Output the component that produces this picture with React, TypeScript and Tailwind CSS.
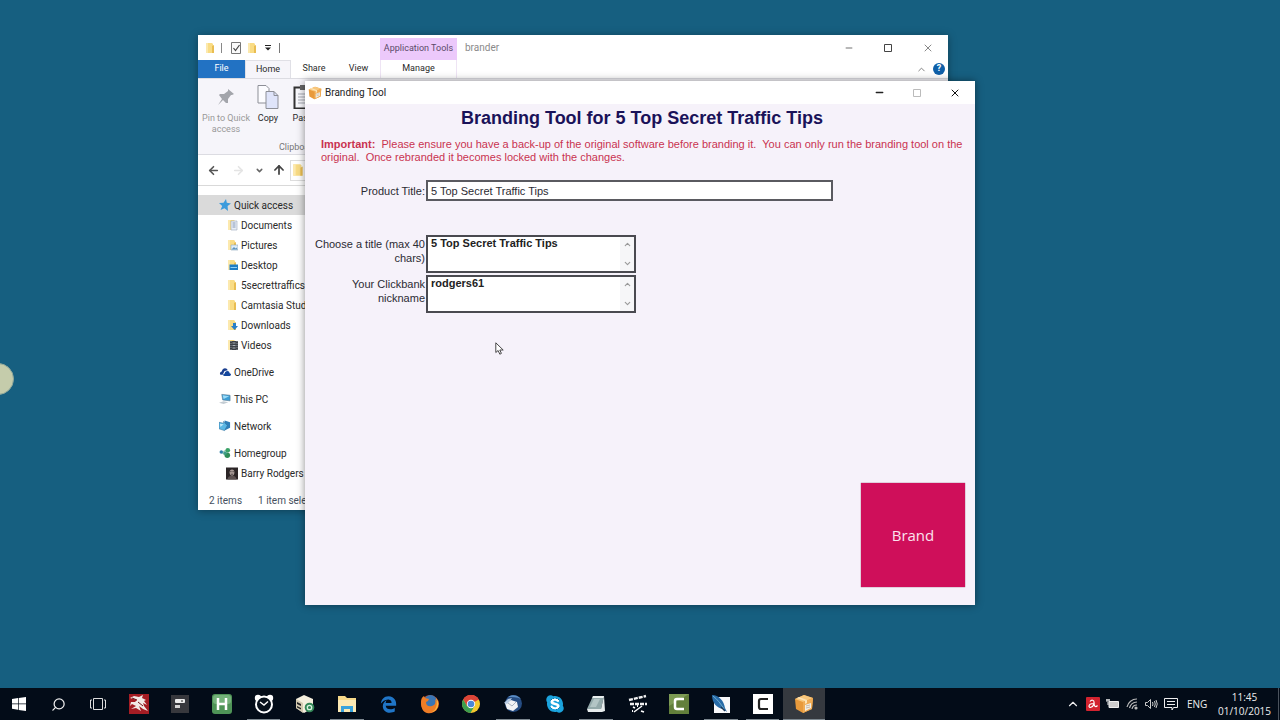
import type { ReactNode } from "react";
import { ArrowLeft, ArrowRight, ArrowUp, ChevronDown, ChevronUp, Minus, Search, X } from "lucide-react";
import { FaEdgeLegacy, FaSkype } from "react-icons/fa6";

function FolderIcon({ size = 12, children }: { size?: number; children?: ReactNode }) {
  return (
    <svg width={size} height={size} viewBox="0 0 12 12" className="shrink-0">
      <path d="M2 1h6l1 1v9H2z" fill="#f9dc85" />
      <path d="M8 4l2-1v8H8z" fill="#e9bd52" />
      <path d="M2 1h2v10H2z" fill="#fce9ae" />
      {children}
    </svg>
  );
}

function BoxIcon({ size = 14 }: { size?: number }) {
  return (
    <svg width={size} height={size} viewBox="0 0 20 20" className="shrink-0">
      <path d="M1 5l9-4 9 3-1 11-9 4-7-4z" fill="#e89a3c" />
      <path d="M1 5l9-4 9 3-10 4z" fill="#f8c77c" />
      <path d="M9 8l10-4-1 11-9 4z" fill="#f0ac55" />
      <path d="M5 3l8 3v3l-2 1V7L3 4z" fill="#fde3b4" />
      <path d="M11 11l6-2v5l-6 3z" fill="#f3efe6" />
      <path d="M12 12l4-1M12 14l4-1" stroke="#b7aa98" strokeWidth=".8" />
    </svg>
  );
}

function MaximiseIcon({ color }: { color: string }) {
  return (
    <svg width="10" height="10" viewBox="0 0 10 10">
      <path d="M1.500 1.500h7v7h-7z" fill="none" stroke={color} />
    </svg>
  );
}

const treeIcons: Record<string, ReactNode> = {
  star: (
    <svg width="12" height="12" viewBox="0 0 12 12">
      <path d="M7 0l.8 3.800L12 4.500 8.600 7l.4 5-3.500-2.800L1.500 11l1.700-4L0 4l4.500-.2z" fill="#3a9bdc" />
    </svg>
  ),
  documents: (
    <FolderIcon>
      <path d="M5 2h6v9H5z" fill="#e8edf5" stroke="#9aa9bd" strokeWidth=".6" />
      <path d="M6.500 4h3M6.500 6h3M6.500 8h3" stroke="#6f86a8" strokeWidth=".8" />
    </FolderIcon>
  ),
  pictures: (
    <FolderIcon>
      <path d="M5 6h7v5H5z" fill="#dcecf8" stroke="#8ea7bc" strokeWidth=".6" />
      <path d="M5.500 10.500L8 8l1.500 1.500 1-1 1 2z" fill="#5d94bd" />
    </FolderIcon>
  ),
  desktop: (
    <FolderIcon>
      <path d="M3.500 5.500H12V11H3.500z" fill="#1f7cc4" />
      <path d="M4.500 8.500H11" stroke="#8fd0f5" />
    </FolderIcon>
  ),
  folder: <FolderIcon />,
  downloads: (
    <FolderIcon>
      <path d="M7 4h3v3h2l-3.500 4L5 7h2z" fill="#2a7fc8" />
    </FolderIcon>
  ),
  videos: (
    <FolderIcon>
      <path d="M4 2h8v9H4z" fill="#3d4147" />
      <path d="M6.500 4h3M6.500 6.500h3M6.500 9h3" stroke="#a9b0b8" />
      <path d="M5 2v9M11 2v9" stroke="#8b9097" strokeDasharray="1 1" />
    </FolderIcon>
  ),
  onedrive: (
    <svg width="13" height="12" viewBox="0 0 13 12">
      <path d="M1 8c0-1.500 1-2.500 2-2.500C3.500 3 5 2 6.500 2 8 2 9 3 9.500 4L6 5 4 9H2C1.300 9 1 8.600 1 8z" fill="#1b3f8f" />
      <path d="M4.500 9.500c0-1.200.8-2 1.700-2C6.500 6 7.500 5 9 5s2.200 1 2.500 2.300c1 .1 1.500.8 1.500 1.500 0 .9-.7 1.400-1.500 1.400H5.800c-.8 0-1.300-.3-1.300-.7z" fill="#14479e" />
    </svg>
  ),
  pc: (
    <svg width="13" height="12" viewBox="0 0 13 12">
      <path d="M3 1l9 1v6l-8-1z" fill="#3c9ed6" stroke="#5a7e97" strokeWidth=".7" />
      <path d="M4 2l7 1-6 3z" fill="#9bdcf8" />
      <path d="M0 10l5-1.500 5 1L5 11.500z" fill="#c3ccd3" />
    </svg>
  ),
  network: (
    <svg width="13" height="12" viewBox="0 0 13 12">
      <path d="M6 0l6 2v6l-6 3z" fill="#2f7fb9" />
      <path d="M0 2l5 1V1l4 4.500L6 11 0 9z" fill="#5bb7e4" stroke="#2f6f9c" strokeWidth=".6" />
      <path d="M1 3.500l4 .6L1.500 7z" fill="#bfe8fa" />
    </svg>
  ),
  homegroup: (
    <svg width="13" height="12" viewBox="0 0 13 12">
      <path d="M2.500 5.500L9 2M2.500 5.500L9 9.500" stroke="#7fb9a0" strokeWidth=".8" />
      <circle cx="2.500" cy="5" r="1.900" fill="#2d7fa8" />
      <circle cx="9.500" cy="3" r="2.500" fill="#3aa267" />
      <circle cx="9" cy="8.500" r="3" fill="#2f8d58" />
      <circle cx="6.500" cy="6" r="2" fill="#3f9d87" />
    </svg>
  ),
  user: (
    <svg width="13" height="13" viewBox="0 0 13 13">
      <path d="M0 0h13v13H0z" fill="#2b2526" />
      <ellipse cx="6.500" cy="5.500" rx="2.600" ry="3.400" fill="#a99c98" />
      <path d="M4.500 4.500h1.500M7 4.500h1.500M5.300 7.300h2.400" stroke="#3b3233" strokeWidth=".8" />
      <path d="M1.500 13c.5-3 2.500-4 5-4s4.500 1 5 4z" fill="#5c5252" />
    </svg>
  ),
};

const quickAccess = [
  { label: "Documents", icon: "documents" },
  { label: "Pictures", icon: "pictures" },
  { label: "Desktop", icon: "desktop" },
  { label: "5secrettrafficsoftware", icon: "folder" },
  { label: "Camtasia Studio", icon: "folder" },
  { label: "Downloads", icon: "downloads" },
  { label: "Videos", icon: "videos" },
];

function TreeItem({ label, icon, nested, active }: { label: string; icon: string; nested?: boolean; active?: boolean }) {
  return (
    <a
      href="#"
      className={`flex h-5 items-center gap-[3px] whitespace-nowrap ${nested ? "pl-7" : "pl-[21px]"} ${active ? "bg-[#dadada]" : ""}`}
    >
      <span className="flex w-3 justify-center">{treeIcons[icon]}</span>
      {label}
    </a>
  );
}

function ExplorerWindow() {
  return (
    <section
      aria-label="brander"
      className="absolute top-[35px] left-[198px] w-[750px] overflow-hidden bg-white font-[Roboto,'Noto_Sans',sans-serif] text-[10px] text-[#2a2a2a] shadow-[0_1px_8px_rgba(0,0,0,0.35)]"
    >
      {/* Title bar */}
      <header className="flex h-[25px] items-center">
        <div className="flex w-[182px] items-center pl-1.5">
          <FolderIcon />
          <span className="ml-[5px] h-2.5 w-px bg-[#888]" />
          <svg width="12" height="12" viewBox="0 0 12 12" className="ml-2">
            <path d="M1.500.5h9v11h-9z" fill="#fafafa" stroke="#777" />
            <path d="M3.500 6l2 2.500 4-5.500" fill="none" stroke="#444" strokeWidth="1.200" />
          </svg>
          <span className="ml-1">
            <FolderIcon />
          </span>
          <svg width="8" height="6" viewBox="0 0 8 6" className="ml-1.5">
            <path d="M1 .5h6" stroke="#222" />
            <path d="M1 2.500h6l-3 3z" fill="#222" />
          </svg>
          <span className="ml-[7px] h-2.5 w-px bg-[#777]" />
        </div>
        <div className="mt-[3px] flex h-[22px] w-[77px] items-center justify-center bg-[#ecc9fb] text-[9px] whitespace-nowrap text-[#5a4a68]">
          Application Tools
        </div>
        <p className="ml-2 flex-1 text-[#8a8a8a]">brander</p>
        <div className="flex gap-[29px] pr-3.5">
          <button type="button" aria-label="Minimise">
            <Minus size={10} strokeWidth={2} color="#555" />
          </button>
          <button type="button" aria-label="Maximise">
            <MaximiseIcon color="#444" />
          </button>
          <button type="button" aria-label="Close">
            <X size={12} strokeWidth={2} color="#888" />
          </button>
        </div>
      </header>

      {/* Ribbon tabs */}
      <nav className="flex h-[18px] items-stretch text-[9px]">
        <button type="button" className="w-[47px] bg-[#2272c3] text-white">File</button>
        <button type="button" className="w-[46px] border-x border-t border-[#e0e0e6] bg-[#f6f5fa]">Home</button>
        <button type="button" className="w-[46px]">Share</button>
        <button type="button" className="w-[43px]">View</button>
        <button type="button" className="w-[77px] border-x border-[#eee4f4]">Manage</button>
        <div className="flex flex-1 items-center justify-end gap-1.5 pr-[3px]">
          <button type="button" aria-label="Collapse ribbon">
            <ChevronUp size={11} color="#777" />
          </button>
          <button type="button" aria-label="Help" className="flex size-3 items-center justify-center rounded-full bg-[#0f5fa8] text-[9px] font-bold text-white">
            ?
          </button>
        </div>
      </nav>

      {/* Ribbon */}
      <div className="flex h-[77px] border-y border-[#dcdce2] bg-[#f6f5fa] pt-1.5 text-[9px] leading-[11px]">
        <button type="button" className="flex w-14 flex-col items-center gap-1 text-[#999]">
          <svg width="20" height="24" viewBox="0 0 20 24">
            <path d="M12 4l6 5-2 1-1 0-3 4 0 4-2 0-3-3-5 5 4-6-3-4 1-1 4 0 4-3z" fill="#a3a5ab" />
          </svg>
          <span>Pin to Quick access</span>
        </button>
        <button type="button" className="flex w-7 flex-col items-center gap-1">
          <svg width="22" height="24" viewBox="0 0 22 24">
            <path d="M1 .5h8l3 3V18H1z" fill="#fcfcff" stroke="#8d8f97" />
            <path d="M9 6.500h8l4 4V23.500H9z" fill="#dfe4fa" stroke="#8d8f97" />
            <path d="M17 6.500v4h4" fill="none" stroke="#8d8f97" />
          </svg>
          <span>Copy</span>
        </button>
        <button type="button" className="ml-2 flex w-7 flex-col items-center gap-1">
          <svg width="22" height="24" viewBox="0 0 22 24">
            <path d="M1.500 2.500h19v21h-19z" fill="#fafafe" stroke="#333" strokeWidth="2" />
            <path d="M7 0h8v5H7z" fill="#666" />
            <path d="M5 9h12M5 12h12M5 15h12M5 18h12" stroke="#a5a9b3" />
          </svg>
          <span>Paste</span>
        </button>
      </div>
      <p className="-mt-3.5 h-3.5 pl-[81px] text-[9px] leading-[12px] text-[#777]">Clipboard</p>

      {/* Address bar */}
      <div className="flex h-[31px] items-center border-b border-[#d9d9d9] pl-[9px]">
        <button type="button" aria-label="Back"><ArrowLeft size={13} strokeWidth={3} color="#555" /></button>
        <button type="button" aria-label="Forward" className="ml-3"><ArrowRight size={13} strokeWidth={3} color="#e4e4e4" /></button>
        <button type="button" aria-label="Recent locations" className="ml-2.5"><ChevronDown size={9} strokeWidth={4} color="#666" /></button>
        <button type="button" aria-label="Up" className="ml-2"><ArrowUp size={14} strokeWidth={3} color="#444" /></button>
        <div className="ml-1 flex h-[21px] flex-1 items-center border border-[#ddd]">
          <FolderIcon size={14} />
        </div>
      </div>

      {/* Navigation tree */}
      <nav className="w-[107px] overflow-hidden pt-[9px]">
        <TreeItem label="Quick access" icon="star" active />
        {quickAccess.map((item) => (
          <TreeItem key={item.label} label={item.label} icon={item.icon} nested />
        ))}
        <div className="flex flex-col gap-[7px] pt-[7px]">
          <TreeItem label="OneDrive" icon="onedrive" />
          <TreeItem label="This PC" icon="pc" />
          <TreeItem label="Network" icon="network" />
          <TreeItem label="Homegroup" icon="homegroup" />
        </div>
        <TreeItem label="Barry Rodgers" icon="user" nested />
      </nav>
      <footer className="mt-[7px] flex h-5 items-center gap-4 pl-[11px] text-[#45505e]">
        <span>2 items</span>
        <span>1 item selected</span>
      </footer>
    </section>
  );
}

function ScrollField({ id, value }: { id: string; value: string }) {
  return (
    <div className="flex h-[38px] w-[210px] border-2 border-[#4a4a50] bg-white">
      <textarea
        id={id}
        defaultValue={value}
        className="min-w-0 flex-1 resize-none overflow-hidden pl-[3px] text-[11px] leading-[13px] font-bold text-[#222] outline-none"
      />
      <div className="flex w-3.5 flex-col items-center justify-between bg-[#f6f6f8] py-[3px]">
        <button type="button" aria-label="Scroll up"><ChevronUp size={9} strokeWidth={3} color="#999" /></button>
        <button type="button" aria-label="Scroll down"><ChevronDown size={9} strokeWidth={3} color="#999" /></button>
      </div>
    </div>
  );
}

function BrandingWindow() {
  return (
    <section
      aria-label="Branding Tool"
      className="absolute top-[81px] left-[305px] w-[670px] bg-[#f6f2fa] font-['Liberation_Sans',Arial,sans-serif] shadow-[0_0_8px_rgba(0,0,0,0.45)]"
    >
      <header className="flex h-[23px] items-center bg-white pl-[3px] font-[Roboto,'Noto_Sans',sans-serif] text-[10px] text-[#222]">
        <BoxIcon />
        <span className="ml-[3px] flex-1">Branding Tool</span>
        <div className="flex gap-[27px] pr-3.5">
          <button type="button" aria-label="Minimise"><Minus size={11} strokeWidth={3} color="#222" /></button>
          <button type="button" aria-label="Maximise" disabled><MaximiseIcon color="#bbb" /></button>
          <button type="button" aria-label="Close"><X size={12} strokeWidth={2} color="#111" /></button>
        </div>
      </header>

      <form className="flex flex-col pr-2.5 pb-[18px]">
        <h1 className="pt-1 pl-3.5 text-center text-[18px] leading-5 font-bold text-[#1a1259]">
          Branding Tool for 5 Top Secret Traffic Tips
        </h1>
        <p className="mt-2.5 pl-4 text-[11px] leading-[13px] whitespace-pre-wrap text-[#c93350]">
          <strong>Important:</strong>
          {"  Please ensure you have a back-up of the original software before branding it.  You can only run the branding tool on the original.  Once rebranded it becomes locked with the changes."}
        </p>

        <div className="mt-4 grid grid-cols-[120px_1fr] gap-x-px text-[11px] leading-[14px] text-[#2b2b33]">
          <label htmlFor="product" className="pt-1 text-right">Product Title:</label>
          <input
            id="product"
            defaultValue="5 Top Secret Traffic Tips"
            className="h-[21px] w-[407px] border-2 border-[#5a5a60] bg-white pl-[3px] text-[11px] outline-none"
          />
          <label htmlFor="title" className="mt-[34px] pt-0.5 pl-2 text-right">Choose a title (max 40 chars)</label>
          <div className="mt-[34px]">
            <ScrollField id="title" value="5 Top Secret Traffic Tips" />
          </div>
          <label htmlFor="nickname" className="mt-0.5 pt-0.5 pl-8 text-right">Your Clickbank nickname</label>
          <div className="mt-0.5">
            <ScrollField id="nickname" value="rodgers61" />
          </div>
        </div>

        <button
          type="button"
          className="mt-[170px] size-[104px] self-end bg-[#cf0f5a] font-['Open_Sans','Noto_Sans',sans-serif] text-[15px] font-medium text-[#fbe3ee] shadow-[0_0_1px_#7d2348]"
        >
          Brand
        </button>
      </form>
    </section>
  );
}

const taskbarApps: { name: string; open?: boolean; active?: boolean; icon: ReactNode }[] = [
  {
    name: "Dragon",
    icon: (
      <svg width="20" height="20" viewBox="0 0 20 20">
        <path d="M0 0h20v20H0z" fill="#a51d24" />
        <path d="M1 4l4-2 5 1 4-2-1 3 4 2-2 1 3 4-4-2 1 3 4 5-5-2-4-3 2 5-5-3-5 1 5-3-4-2-2 2 1-4 4 0 2-2z" fill="#f2e9e6" />
        <path d="M3 4l5 2M9 8l5 4" stroke="#6b1218" />
      </svg>
    ),
  },
  {
    name: "Recorder",
    icon: (
      <svg width="18" height="18" viewBox="0 0 18 18">
        <rect width="18" height="18" fill="#37383d" />
        <rect x="4" y="4" width="10" height="4" rx="1" fill="#ececec" />
        <path d="M10 5h2v2h-2z" fill="#888" />
        <rect x="4" y="10" width="5" height="3" fill="#d5d5d5" />
      </svg>
    ),
  },
  {
    name: "AutoHotkey",
    icon: (
      <svg width="20" height="20" viewBox="0 0 20 20">
        <rect width="20" height="20" rx="3" fill="#4f9457" />
        <rect x="1" y="1" width="18" height="9" rx="3" fill="#74b17a" />
        <path d="M6 4v12M14 4v12M6 10h8" fill="none" stroke="#fff" strokeWidth="2.500" />
      </svg>
    ),
  },
  {
    name: "Alarm clock",
    open: true,
    icon: (
      <svg width="20" height="20" viewBox="0 0 20 20">
        <circle cx="4" cy="4" r="3.200" fill="#fff" />
        <circle cx="16" cy="4" r="3.200" fill="#fff" />
        <circle cx="10" cy="10.500" r="8" fill="#07111c" stroke="#fff" strokeWidth="2" />
        <path d="M6 8l4 3 4-3.500" fill="none" stroke="#fff" strokeWidth="1.500" />
      </svg>
    ),
  },
  {
    name: "Package manager",
    icon: (
      <svg width="20" height="20" viewBox="0 0 20 20">
        <path d="M1 5l8-4 9 4v9l-9 5-8-5z" fill="#f4eedd" />
        <path d="M1 5l7 4v10l-7-5z" fill="#d3cab0" />
        <path d="M2 8l4 2v2L2 10zM2 12l4 2v1.500l-4-2z" fill="#222" />
        <circle cx="14.500" cy="13.500" r="4.800" fill="#338757" />
        <circle cx="14.500" cy="13.500" r="2.200" fill="none" stroke="#d7f2df" strokeWidth="1.300" />
      </svg>
    ),
  },
  {
    name: "File Explorer",
    open: true,
    icon: (
      <svg width="20" height="18" viewBox="0 0 20 18">
        <path d="M1 1h7l2 2h9v14H1z" fill="#f6d98a" />
        <path d="M1 5h18v12H1z" fill="#fbe9b4" />
        <path d="M4 17v-6h12v6h-3v-3H7v3z" fill="#38a2dc" />
      </svg>
    ),
  },
  { name: "Edge", icon: <FaEdgeLegacy size={17} color="#2076c7" /> },
  {
    name: "Firefox",
    icon: (
      <svg width="20" height="20" viewBox="0 0 20 20">
        <circle cx="10" cy="10" r="9" fill="#d94f1e" />
        <circle cx="10.500" cy="7.500" r="6.500" fill="#3a76b4" />
        <path d="M1 8c0-3 1-5 3-6l1 2 4 1-1 2-2 1c0 4 3 5 6 4 3-1 4-3 3-7 3 3 4 6 2 9-2 4-6 6-10 5C3 18 1 14 1 8z" fill="#ee7d26" />
        <path d="M16 4c2 2 3 5 2 8-1 4-4 6-6 6 4-2 6-7 4-14z" fill="#f8b73d" />
      </svg>
    ),
  },
  {
    name: "Chrome",
    icon: (
      <svg width="20" height="20" viewBox="0 0 20 20">
        <circle cx="10" cy="10" r="9" fill="#f4c82e" />
        <path d="M10 10L2.200 5.500A9 9 0 0 1 17.800 5.500z" fill="#dc4437" />
        <path d="M10 6h8A9 9 0 0 0 2.200 5.500L6 12z" fill="#dc4437" />
        <path d="M2.200 5.500A9 9 0 0 0 9.500 19l4-7-3.500 2-4-2z" fill="#3b9d4f" />
        <circle cx="10" cy="10" r="4.200" fill="#fff" />
        <circle cx="10" cy="10" r="3.300" fill="#4a86d8" />
      </svg>
    ),
  },
  {
    name: "Thunderbird",
    open: true,
    icon: (
      <svg width="20" height="20" viewBox="0 0 20 20">
        <circle cx="10.500" cy="9.500" r="8.500" fill="#264d83" />
        <path d="M5 3c4-3 10-2 13 2-4-2-9-2-13-2z" fill="#5b8dc4" />
        <path d="M2 9l6-3 6 2 1 5-5 4-6-2z" fill="#f2f3f5" />
        <path d="M5 9l4 3 4-4" fill="none" stroke="#a9b3c0" />
        <path d="M1 9l4-4 4-1-2 3-3 3z" fill="#b6cbe3" />
      </svg>
    ),
  },
  {
    name: "Skype",
    icon: <FaSkype size={20} color="#1ba3dd" className="bg-[radial-gradient(circle,white_40%,transparent_40%)]" />,
  },
  {
    name: "Notepad",
    open: true,
    icon: (
      <svg width="20" height="20" viewBox="0 0 20 20">
        <path d="M7 2h11l-3 13H1z" fill="#93a9aa" />
        <path d="M7 2h11l-.5 2H6.300z" fill="#e8eeee" />
        <path d="M1 15h14l3-13 1 15-3 1H2z" fill="#e6ecec" />
        <path d="M8 5l-4 8h6l4-8z" fill="#b3c5c5" />
      </svg>
    ),
  },
  {
    name: "Video editor",
    icon: (
      <svg width="20" height="20" viewBox="0 0 20 20">
        <path d="M1 6l17-4M2 10h17" stroke="#f2f2f2" strokeWidth="2.400" strokeDasharray="4 1" />
        <path d="M6 18l8-6" stroke="#fff" strokeWidth="1.400" />
        <path d="M5 13l2 1M13 17l3 1M9 12l1 0M4 17l1 0" stroke="#fff" strokeWidth="1.800" />
      </svg>
    ),
  },
  {
    name: "Camtasia Studio",
    icon: (
      <svg width="20" height="20" viewBox="0 0 20 20">
        <rect width="20" height="20" fill="#627f3b" />
        <path d="M0 0h20L0 12z" fill="#7c9a54" />
        <path d="M15 5H8q-2 0-2 2v6q0 2 2 2h7" fill="none" stroke="#fff" strokeWidth="2.500" />
      </svg>
    ),
  },
  {
    name: "Feather",
    open: true,
    icon: (
      <svg width="20" height="20" viewBox="0 0 20 20">
        <path d="M3 3h16v16H3z" fill="#f8f9fb" />
        <path d="M1 1c7 0 12 6 13 13l2 4-4-3C6 14 1 9 1 1z" fill="#276ba8" />
        <path d="M2 2c4 3 8 8 11 13" fill="none" stroke="#7fbcd8" strokeWidth=".8" />
        <path d="M10 13l4 4" stroke="#1d3654" strokeWidth="1.500" />
      </svg>
    ),
  },
  {
    name: "Camtasia Recorder",
    open: true,
    icon: (
      <svg width="20" height="20" viewBox="0 0 20 20">
        <rect width="20" height="20" fill="#fff" />
        <path d="M15 5H8q-2 0-2 2v6q0 2 2 2h7" fill="none" stroke="#222" strokeWidth="2.200" />
      </svg>
    ),
  },
  { name: "Branding Tool", open: true, active: true, icon: <BoxIcon size={20} /> },
];

function Taskbar() {
  return (
    <footer className="flex h-8 items-stretch bg-[#030c18] font-['Open_Sans','Noto_Sans',sans-serif] text-[10px] text-[#eee]">
      <button type="button" aria-label="Start" className="flex w-[38px] items-center justify-center">
        <svg width="14" height="14" viewBox="0 0 14 14" fill="#fff">
          <path d="M0 2l6-1v5.500H0zM6.700.9L14 0v6.500H6.700zM0 7.200h6v5.500l-6-.9zM6.700 7.200H14V14l-7.300-1.100z" />
        </svg>
      </button>
      <button type="button" aria-label="Search" className="flex w-10 items-center justify-center">
        <Search size={15} strokeWidth={2} className="-scale-x-100" />
      </button>
      <button type="button" aria-label="Task view" className="flex w-10 items-center justify-center">
        <svg width="16" height="14" viewBox="0 0 16 14" fill="none" stroke="#ddd">
          <path d="M3.500 1.500h9v11h-9zM2 3H.5v8H2M14 3h1.500v8H14" />
        </svg>
      </button>
      <div className="grid w-[707px] grid-cols-17">
        {taskbarApps.map((app) => (
          <button
            key={app.name}
            type="button"
            aria-label={app.name}
            className={`relative flex items-center justify-center ${app.active ? "bg-[#35393f]" : ""}`}
          >
            {app.icon}
            {app.open && <span className={`absolute bottom-0 h-px bg-[#7d8890] ${app.active ? "inset-x-0" : "inset-x-1"}`} />}
          </button>
        ))}
      </div>

      {/* System tray */}
      <div className="ml-auto flex items-center">
        <div className="flex items-center gap-1.5 pr-[9px]">
          <ChevronUp size={14} strokeWidth={2} />
          <svg width="14" height="14" viewBox="0 0 14 14">
            <rect width="14" height="14" rx="1" fill="#d3232f" />
            <path d="M4 4.500c1.500-2 4-1.500 4 .5 0 2.500 0 4 1.300 4.500.8.300 1.500-.2 2.200-1M8 6.500c-2.500 0-5 1-5 2.800C3 11 6.500 11 8 7" fill="none" stroke="#fff" strokeWidth="1.200" />
          </svg>
          <svg width="14" height="12" viewBox="0 0 14 12">
            <path d="M3 3.500h9.500v6H3z" fill="#ccc" stroke="#eee" />
            <path d="M0 2h4M1 1v3M3 1v3M2 4v3" stroke="#eee" />
          </svg>
          <svg width="13" height="12" viewBox="0 0 13 12" fill="none" stroke="#bbb" strokeWidth="1.200">
            <path d="M1 9A10 10 0 0 1 11 1M3.500 10A8 8 0 0 1 11 4M6 11A5 5 0 0 1 11 7" />
            <circle cx="10" cy="10" r="1" fill="#eee" />
          </svg>
          <svg width="13" height="12" viewBox="0 0 13 12" fill="none" stroke="#ccc">
            <path d="M.5 4.500h2l3-3v9l-3-3h-2zM7.500 4q1 2 0 4M9.500 3q1.500 3 0 6M11 2q2.500 4 0 8" />
          </svg>
          <svg width="14" height="14" viewBox="0 0 14 14" fill="none" stroke="#eee">
            <path d="M.5 1.500h13v9H9.500L8 13v-2.500H.5zM3 4.500h8M3 7.500h8" />
          </svg>
        </div>
        <span className="w-6">ENG</span>
        <div className="w-[67px] text-center leading-[14px]">
          <p>11:45</p>
          <p>01/10/2015</p>
        </div>
        <span className="h-full w-0.5 border-l border-[#4a525c]" />
      </div>
    </footer>
  );
}

export default function App() {
  return (
    <div className="flex min-h-screen flex-col overflow-hidden bg-[#165f80]">
      <main className="relative flex-1">
        <span className="absolute top-[363px] -left-[18px] size-8 rounded-full border border-[#8fa79a] bg-[#c5ccab]" />
        <ExplorerWindow />
        <BrandingWindow />
        {/* Mouse pointer */}
        <svg width="9" height="13" viewBox="0 0 9 13" className="absolute top-[342px] left-[495px]">
          <path d="M.8.8v9.700l2.300-2 1.700 3.700 1.600-.8L4.800 8h3.400z" fill="#fff" stroke="#333" strokeWidth=".9" />
        </svg>
      </main>
      <Taskbar />
    </div>
  );
}
